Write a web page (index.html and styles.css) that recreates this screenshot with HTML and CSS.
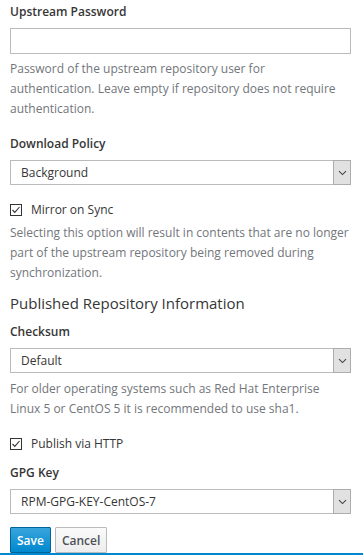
FILE: index.html
```html
<!DOCTYPE html>
<html>
<head>
<meta charset="utf-8">
<link rel="stylesheet" href="styles.css">
</head>
<body>
<form class="form">
  <div class="group">
    <label class="label">Upstream Password</label>
    <div class="input"></div>
    <p class="help">Password of the upstream repository user for authentication. Leave empty if repository does not require authentication.</p>
  </div>
  <div class="group">
    <label class="label">Download Policy</label>
    <div class="select"><span class="value">Background</span><span class="arrow"><svg width="9" height="6" viewBox="0 0 9 6"><path d="M1 1.2 L4.5 4.6 L8 1.2" fill="none" stroke="#444" stroke-width="1.1"/></svg></span></div>
  </div>
  <div class="group">
    <div class="check"><span class="box"><svg width="12" height="12" viewBox="0 0 12 12"><rect x="0.5" y="0.5" width="11" height="11" fill="#fff" stroke="#333"/><path d="M2.5 6 L4.8 8.4 L9.5 3" fill="none" stroke="#333" stroke-width="1.1"/></svg></span><span>Mirror on Sync</span></div>
    <p class="help tight">Selecting this option will result in contents that are no longer part of the upstream repository being removed during synchronization.</p>
  </div>
  <h4 class="heading">Published Repository Information</h4>
  <div class="group">
    <label class="label">Checksum</label>
    <div class="select"><span class="value">Default</span><span class="arrow"><svg width="9" height="6" viewBox="0 0 9 6"><path d="M1 1.2 L4.5 4.6 L8 1.2" fill="none" stroke="#444" stroke-width="1.1"/></svg></span></div>
    <p class="help close">For older operating systems such as Red Hat Enterprise Linux 5 or CentOS 5 it is recommended to use sha1.</p>
  </div>
  <div class="group short">
    <div class="check"><span class="box"><svg width="12" height="12" viewBox="0 0 12 12"><rect x="0.5" y="0.5" width="11" height="11" fill="#fff" stroke="#333"/><path d="M2.5 6 L4.8 8.4 L9.5 3" fill="none" stroke="#333" stroke-width="1.1"/></svg></span><span>Publish via HTTP</span></div>
  </div>
  <div class="group">
    <label class="label">GPG Key</label>
    <div class="select"><span class="value">RPM-GPG-KEY-CentOS-7</span><span class="arrow"><svg width="9" height="6" viewBox="0 0 9 6"><path d="M1 1.2 L4.5 4.6 L8 1.2" fill="none" stroke="#444" stroke-width="1.1"/></svg></span></div>
  </div>
  <div class="buttons">
    <button type="button" class="btn primary">Save</button>
    <button type="button" class="btn">Cancel</button>
  </div>
</form>
<div class="bottom-bar"></div>
</body>
</html>
```
FILE: styles.css
```css
html, body {
  margin: 0;
  padding: 0;
  background: #fff;
}
body {
  font-family: "Open Sans", "Liberation Sans", sans-serif;
  font-size: 12px;
  line-height: 20px;
  color: #363636;
  overflow: hidden;
}
.form {
  padding: 2px 12px 0 10px;
}
.group {
  margin-bottom: 15px;
}
.group.short {
  margin-bottom: 9px;
}
.label {
  display: block;
  font-weight: 600;
  margin-bottom: 6px;
}
.input {
  height: 26px;
  box-sizing: border-box;
  border: 1px solid #bbb;
  background: #fff;
}
.help {
  margin: 5px 0 0;
  color: #72767b;
}
.help.tight {
  margin-top: 3px;
}
.help.close {
  margin-top: 6px;
}
.select {
  display: flex;
  height: 25px;
  box-sizing: border-box;
  border: 1px solid #bbb;
  background: #fff;
}
.select .value {
  flex: 1;
  padding-left: 10px;
  line-height: 23px;
  color: #363636;
}
.select .arrow {
  width: 16px;
  background: #e1e1e1;
  border: 1px solid #adadad;
  margin: -1px -1px -1px 0;
  display: flex;
  align-items: center;
  justify-content: center;
}
.check {
  display: flex;
  align-items: center;
  gap: 9px;
  margin-top: 1px;
}
.box {
  display: flex;
  width: 12px;
  height: 12px;
}
.heading {
  margin: -5px 0 9px;
  font-size: 15px;
  font-weight: 400;
  line-height: 20px;
  color: #363636;
}
.buttons {
  display: flex;
  gap: 4px;
  margin-top: -2px;
}
.btn {
  font-family: "Open Sans", "Liberation Sans", sans-serif;
  font-size: 12px;
  font-weight: 600;
  height: 26px;
  padding: 0 6px;
  border: 1px solid #bbb;
  border-radius: 1px;
  background: linear-gradient(#fafafa, #ededed);
  color: #4d5258;
}
.btn.primary {
  background: linear-gradient(#39a5dc, #0088ce);
  border-color: #00659c;
  color: #fff;
}
.bottom-bar {
  height: 3px;
  background: #0088ce;
}
```
